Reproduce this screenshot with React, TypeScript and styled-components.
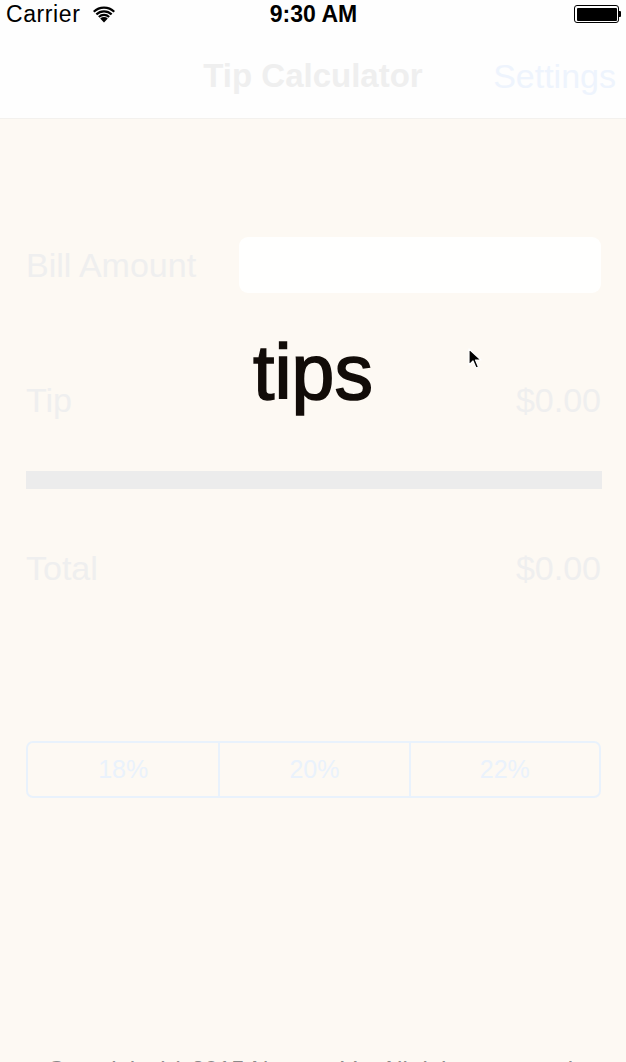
import React from "react";
import styled, { createGlobalStyle } from "styled-components";

const GlobalStyle = createGlobalStyle`
  html, body {
    margin: 0;
    padding: 0;
    background: #fdf9f3;
    overflow: hidden;
  }
  body {
    font-family: "Liberation Sans", Arial, sans-serif;
  }
`;

const Screen = styled.div`
  width: 626px;
  height: 1062px;
  display: flex;
  flex-direction: column;
  overflow: hidden;
  background: #fdf9f3;
`;

const Header = styled.header`
  background: #fefefe;
  border-bottom: 1px solid #f3f1ee;
  display: flex;
  flex-direction: column;
`;

const StatusBar = styled.div`
  height: 28px;
  display: grid;
  grid-template-columns: 1fr auto 1fr;
  align-items: center;
  padding: 0 5px 0 6px;
  color: #000;
`;

const StatusLeft = styled.div`
  display: flex;
  align-items: center;
  gap: 12px;
  font-size: 23px;
  letter-spacing: 0.6px;
`;

const Clock = styled.div`
  font-weight: 700;
  font-size: 23px;
`;

const StatusRight = styled.div`
  display: flex;
  justify-content: flex-end;
  align-items: center;
`;

const Battery = styled.div`
  display: flex;
  align-items: center;
`;

const BatteryBody = styled.div`
  width: 40px;
  height: 13px;
  border: 1.5px solid #000;
  border-radius: 3px;
  padding: 1.5px;
  display: flex;
`;

const BatteryFill = styled.div`
  flex: 1;
  background: #000;
  border-radius: 1px;
`;

const BatteryNub = styled.div`
  width: 2px;
  height: 6px;
  background: #000;
  border-radius: 0 1px 1px 0;
`;

const NavBar = styled.nav`
  height: 90px;
  display: grid;
  grid-template-columns: 1fr auto 1fr;
  align-items: center;
  padding: 6px 10px 0 10px;
  box-sizing: border-box;
`;

const NavTitle = styled.div`
  font-size: 33px;
  font-weight: 700;
  color: #efefef;
`;

const NavAction = styled.div`
  justify-self: end;
  font-size: 34px;
  color: #eef4fd;
`;

const Content = styled.main`
  position: relative;
  flex: 1;
  display: flex;
  flex-direction: column;
  padding: 118px 25px 0 26px;
`;

const BillRow = styled.div`
  display: flex;
  align-items: center;
  justify-content: space-between;
  height: 56px;
`;

const Label = styled.div`
  font-size: 34px;
  line-height: 40px;
  color: #efefef;
`;

const Value = styled(Label)`
  text-align: right;
`;

const Input = styled.div`
  width: 362px;
  height: 56px;
  background: #fffffe;
  border-radius: 9px;
`;

const Row = styled.div<{ $gap: number }>`
  margin-top: ${(p) => p.$gap}px;
  display: flex;
  justify-content: space-between;
  align-items: center;
  height: 40px;
`;

const Divider = styled.div`
  margin-top: 51px;
  height: 18px;
  background: #ececec;
  margin-right: -1px;
`;

const Segmented = styled.div`
  margin-top: 153px;
  height: 53px;
  border: 2px solid #e9f2fc;
  border-radius: 7px;
  display: grid;
  grid-template-columns: 1fr 1fr 1fr;
`;

const Segment = styled.div<{ $first?: boolean }>`
  display: flex;
  align-items: center;
  justify-content: center;
  font-size: 25px;
  color: #eaf2fc;
  border-left: ${(p) => (p.$first ? "none" : "2px solid #e9f2fc")};
`;

const Footer = styled.div`
  margin-top: 259px;
  font-size: 24px;
  line-height: 26px;
  text-align: center;
  color: #8a8a8a;
  white-space: nowrap;
`;

const Splash = styled.div`
  position: absolute;
  left: 0;
  right: 0;
  top: 215px;
  text-align: center;
  font-size: 77px;
  line-height: 77px;
  color: #120c08;
  -webkit-text-stroke: 1.6px #120c08;
  pointer-events: none;
`;

const Cursor = styled.svg`
  position: absolute;
  left: 468px;
  top: 229px;
`;

const WifiIcon = () => (
  <svg width="24" height="18" viewBox="0 0 24 18">
    <path d="M12 17.5 L8.2 13.4 A5.6 5.6 0 0 1 15.8 13.4 Z" fill="#000" />
    <path d="M6.1 11.2 A8.6 8.6 0 0 1 17.9 11.2 L16.4 12.8 A6.4 6.4 0 0 0 7.6 12.8 Z" fill="#000" />
    <path d="M3.6 8.6 A12.2 12.2 0 0 1 20.4 8.6 L18.9 10.2 A10 10 0 0 0 5.1 10.2 Z" fill="#000" />
    <path d="M1 5.9 A15.9 15.9 0 0 1 23 5.9 L21.5 7.5 A13.7 13.7 0 0 0 2.5 7.5 Z" fill="#000" />
  </svg>
);

export default function App() {
  return (
    <>
      <GlobalStyle />
      <Screen>
        <Header>
          <StatusBar>
            <StatusLeft>
              <span>Carrier</span>
              <WifiIcon />
            </StatusLeft>
            <Clock>9:30 AM</Clock>
            <StatusRight>
              <Battery>
                <BatteryBody>
                  <BatteryFill />
                </BatteryBody>
                <BatteryNub />
              </Battery>
            </StatusRight>
          </StatusBar>
          <NavBar>
            <span />
            <NavTitle>Tip Calculator</NavTitle>
            <NavAction>Settings</NavAction>
          </NavBar>
        </Header>
        <Content>
          <BillRow>
            <Label>Bill Amount</Label>
            <Input />
          </BillRow>
          <Row $gap={87}>
            <Label>Tip</Label>
            <Value>$0.00</Value>
          </Row>
          <Divider />
          <Row $gap={59}>
            <Label>Total</Label>
            <Value>$0.00</Value>
          </Row>
          <Segmented>
            <Segment $first>18%</Segment>
            <Segment>20%</Segment>
            <Segment>22%</Segment>
          </Segmented>
          <Footer>Copyright (c) 2015 Nguyen Vu. All rights reserved.</Footer>
          <Splash>tips</Splash>
          <Cursor width="14" height="22" viewBox="0 0 14 22">
            <path d="M1 1 L1 17 L5 13 L8 20 L10.5 19 L7.5 12 L13 12 Z" fill="#000" stroke="#fff" strokeWidth="1.2" strokeLinejoin="round" />
          </Cursor>
        </Content>
      </Screen>
    </>
  );
}
